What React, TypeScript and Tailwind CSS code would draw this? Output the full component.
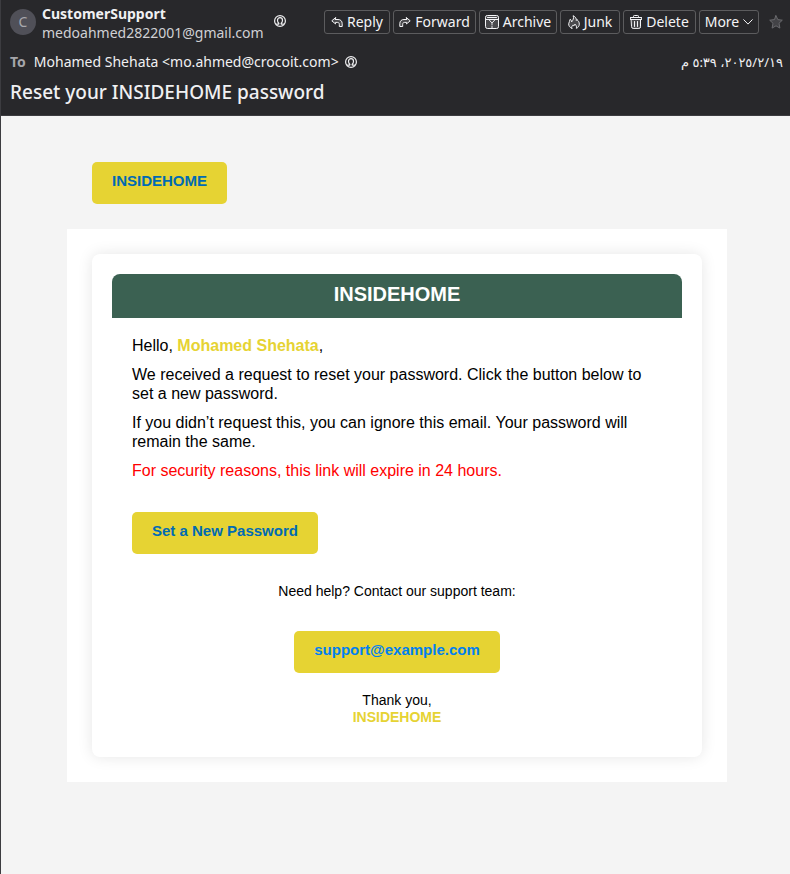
import type { ReactNode } from "react";

const stroke = {
  fill: "none",
  stroke: "currentColor",
  strokeLinecap: "round" as const,
  strokeLinejoin: "round" as const,
};

function ContactIcon() {
  return (
    <svg viewBox="0 0 12 12" className="size-3" {...stroke} strokeWidth="1.2" aria-hidden="true">
      <circle cx="6" cy="6" r="5.4" />
      <path d="M2.5 9.2h1.7c.6 0 .9-.5.6-1C4 7.5 3.5 6.6 3.5 5.2a2.5 2.5 0 0 1 5 0c0 1.4-.5 2.3-1.3 3-.3.5 0 1 .6 1h1.7" />
    </svg>
  );
}

function ReplyIcon({ flip = false }: { flip?: boolean }) {
  return (
    <svg viewBox="0 0 12 12" className={flip ? "size-3 -scale-x-100" : "size-3"} {...stroke} aria-hidden="true">
      <path fill="#4a4a4d" d="M4.5 1.7.8 4.8l3.7 3.1V6.4h1.8c1.4 0 2 .7 2 1.9v2.2h2.9V7.7c0-2.7-1.7-4.2-4.2-4.2H4.5z" />
    </svg>
  );
}

function ArchiveIcon() {
  return (
    <svg viewBox="0 0 14 14" className="size-3.5" {...stroke} aria-hidden="true">
      <path fill="#4a4a4d" d="M.5 4.5V2.3Q.5.5 2.3.5h9.4q1.8 0 1.8 1.8v9.4q0 1.8-1.8 1.8H2.3q-1.8 0-1.8-1.8z" />
      <path d="M.8 4.5h12.4M2.5 2.5h9M4 4.7l2.5 2.8M10 4.7 7.5 7.5M7 7.5v1M7 9.5v.5M7 11.5v1" />
    </svg>
  );
}

function JunkIcon() {
  return (
    <svg viewBox="0 0 12 14" className="h-3.5 w-3" {...stroke} aria-hidden="true">
      <path fill="#4a4a4d" d="M3.8 13.3C1.5 12.5.6 10.7.7 8.8.8 7 2 6.1 2.2 4.2 3.4 5 3.6 6 3.5 7 5.2 5.1 6 3.2 5.2.7 7.5 1.9 8.6 3.5 8.3 5.5L9 4.6c1.6 1.3 2.3 2.8 2.3 4.5 0 2.1-1.1 3.5-3 4.2.5-1.6 0-2.9-1.4-4.2-.1 1-.5 1.5-1.1 1.8l-.6-1c-1.2 1.1-1.8 2-1.4 3.4z" />
    </svg>
  );
}

function DeleteIcon() {
  return (
    <svg viewBox="0 0 12 14" className="h-3.5 w-3" {...stroke} aria-hidden="true">
      <path fill="#4a4a4d" d="M1.5 4.5h9v7.3q0 1.6-1.6 1.6H3.1q-1.6 0-1.6-1.6z" />
      <path d="M.6 2.5h10.8M.6 4.5h10.8M.6 2.5v2M11.4 2.5v2M3.5 2.5V1.3q0-.8.8-.8h3.4q.8 0 .8.8v1.2M4.5 6.5v5M7.5 6.5v5" />
    </svg>
  );
}

function ChevronIcon() {
  return (
    <svg viewBox="0 0 10 6" className="h-1.5 w-2.5" {...stroke} aria-hidden="true">
      <path d="m.7.7 4.3 4.4L9.3.7" />
    </svg>
  );
}

function StarIcon() {
  return (
    <svg viewBox="0 0 14 14" className="size-3.5" {...stroke} aria-hidden="true">
      <path fill="#434347" d="M7 .7 8.8 4.6l4.5.6L10 8.3l.9 4.8L7 10.8l-3.9 2.3.9-4.8L.7 5.2l4.5-.6z" />
    </svg>
  );
}

function ToolButton({ width, children }: { width: string; children: ReactNode }) {
  return (
    <button
      type="button"
      className={`flex h-6 items-center justify-center gap-1 rounded-[3px] border border-[#5c5c5e] text-sm whitespace-nowrap text-[#f4f4f6] ${width}`}
    >
      {children}
    </button>
  );
}

function MessageHeader() {
  return (
    <header className="border-b border-[#3c3c40] bg-[#28282b] pt-1 pr-[7px] pb-2.5 pl-[9px] font-['Noto_Sans','DejaVu_Sans',sans-serif] text-sm text-[#f0f0f2]">
      <div className="flex items-start">
        <div className="mt-[5px] flex size-[26px] shrink-0 items-center justify-center rounded-full bg-[#505058] text-[#a8a8ae]">
          C
        </div>
        <div className="ml-1.5 leading-[19px]">
          <div className="font-bold">CustomerSupport</div>
          <div className="text-[#d0d0d4]">medoahmed2822001@gmail.com</div>
        </div>
        <div className="mt-[11px] ml-2.5">
          <ContactIcon />
        </div>
        <div className="mt-1.5 ml-auto flex gap-[3px]">
          <ToolButton width="w-[66px]"><ReplyIcon />Reply</ToolButton>
          <ToolButton width="w-[83px]"><ReplyIcon flip />Forward</ToolButton>
          <ToolButton width="w-[78px]"><ArchiveIcon />Archive</ToolButton>
          <ToolButton width="w-[60px]"><JunkIcon />Junk</ToolButton>
          <ToolButton width="w-[73px]"><DeleteIcon />Delete</ToolButton>
          <ToolButton width="w-[60px]">More<ChevronIcon /></ToolButton>
        </div>
        <button type="button" aria-label="Star" className="mt-[11px] ml-2.5 text-[#6a6a6e]">
          <StarIcon />
        </button>
      </div>
      <div className="mt-2.5 flex items-center leading-5">
        <span className="mr-2 font-bold text-[#a5a5aa]">To</span>
        <span className="mr-1.5">Mohamed Shehata &lt;mo.ahmed@crocoit.com&gt;</span>
        <ContactIcon />
        <time dir="rtl" className="ml-auto text-[13px]">١٩‏/٢‏/٢٠٢٥، ٥:٣٩ م</time>
      </div>
      <h1 className="mt-2 text-[19px] leading-[25px] font-medium">Reset your INSIDEHOME password</h1>
    </header>
  );
}

function EmailLink({ href, color, children }: { href: string; color: string; children: ReactNode }) {
  return (
    <a
      href={href}
      className={`inline-block rounded-[5px] bg-[#e6d333] px-5 pt-2.5 pb-[15px] align-top text-[15px] leading-[17px] font-bold ${color}`}
    >
      {children}
    </a>
  );
}

export default function App() {
  return (
    <div className="flex min-h-screen flex-col border-l border-[#3c3c40] bg-[#f4f4f4]">
      <MessageHeader />
      <main className="flex-1 pt-[46px] pb-12 pl-[3px] font-['Liberation_Sans',Arial,sans-serif] text-base leading-[19px] text-black">
        <div className="mx-auto max-w-[660px]">
          <div className="mb-[25px] px-[25px]">
            <EmailLink href="#home" color="text-[#006bb3]">INSIDEHOME</EmailLink>
          </div>
          <div className="bg-white p-[25px]">
            <article className="rounded-lg bg-white p-5 shadow-[0_0_15px_rgba(0,0,0,0.1)]">
              <h2 className="rounded-t-lg bg-[#3b6152] pt-2 pb-3 text-center text-xl leading-6 font-bold text-white">
                INSIDEHOME
              </h2>
              <div className="px-5 pt-[18px]">
                <div className="space-y-2.5">
                  <p>Hello, <strong className="text-[#e6d333]">Mohamed Shehata</strong>,</p>
                  <p>We received a request to reset your password. Click the button below to set a new password.</p>
                  <p>If you didn’t request this, you can ignore this email. Your password will remain the same.</p>
                  <p className="text-[#ff0000]">For security reasons, this link will expire in 24 hours.</p>
                </div>
                <div className="mt-8">
                  <EmailLink href="#reset" color="text-[#006bb3]">Set a New Password</EmailLink>
                </div>
              </div>
              <footer className="mt-[29px] pb-[11px] text-center text-sm leading-[17px]">
                <p>Need help? Contact our support team:</p>
                <div className="mt-[31px] mb-[19px]">
                  <EmailLink href="mailto:support@example.com" color="text-[#0080f0]">support@example.com</EmailLink>
                </div>
                <p>Thank you,<br /><strong className="text-[#e6d333]">INSIDEHOME</strong></p>
              </footer>
            </article>
          </div>
        </div>
      </main>
    </div>
  );
}
